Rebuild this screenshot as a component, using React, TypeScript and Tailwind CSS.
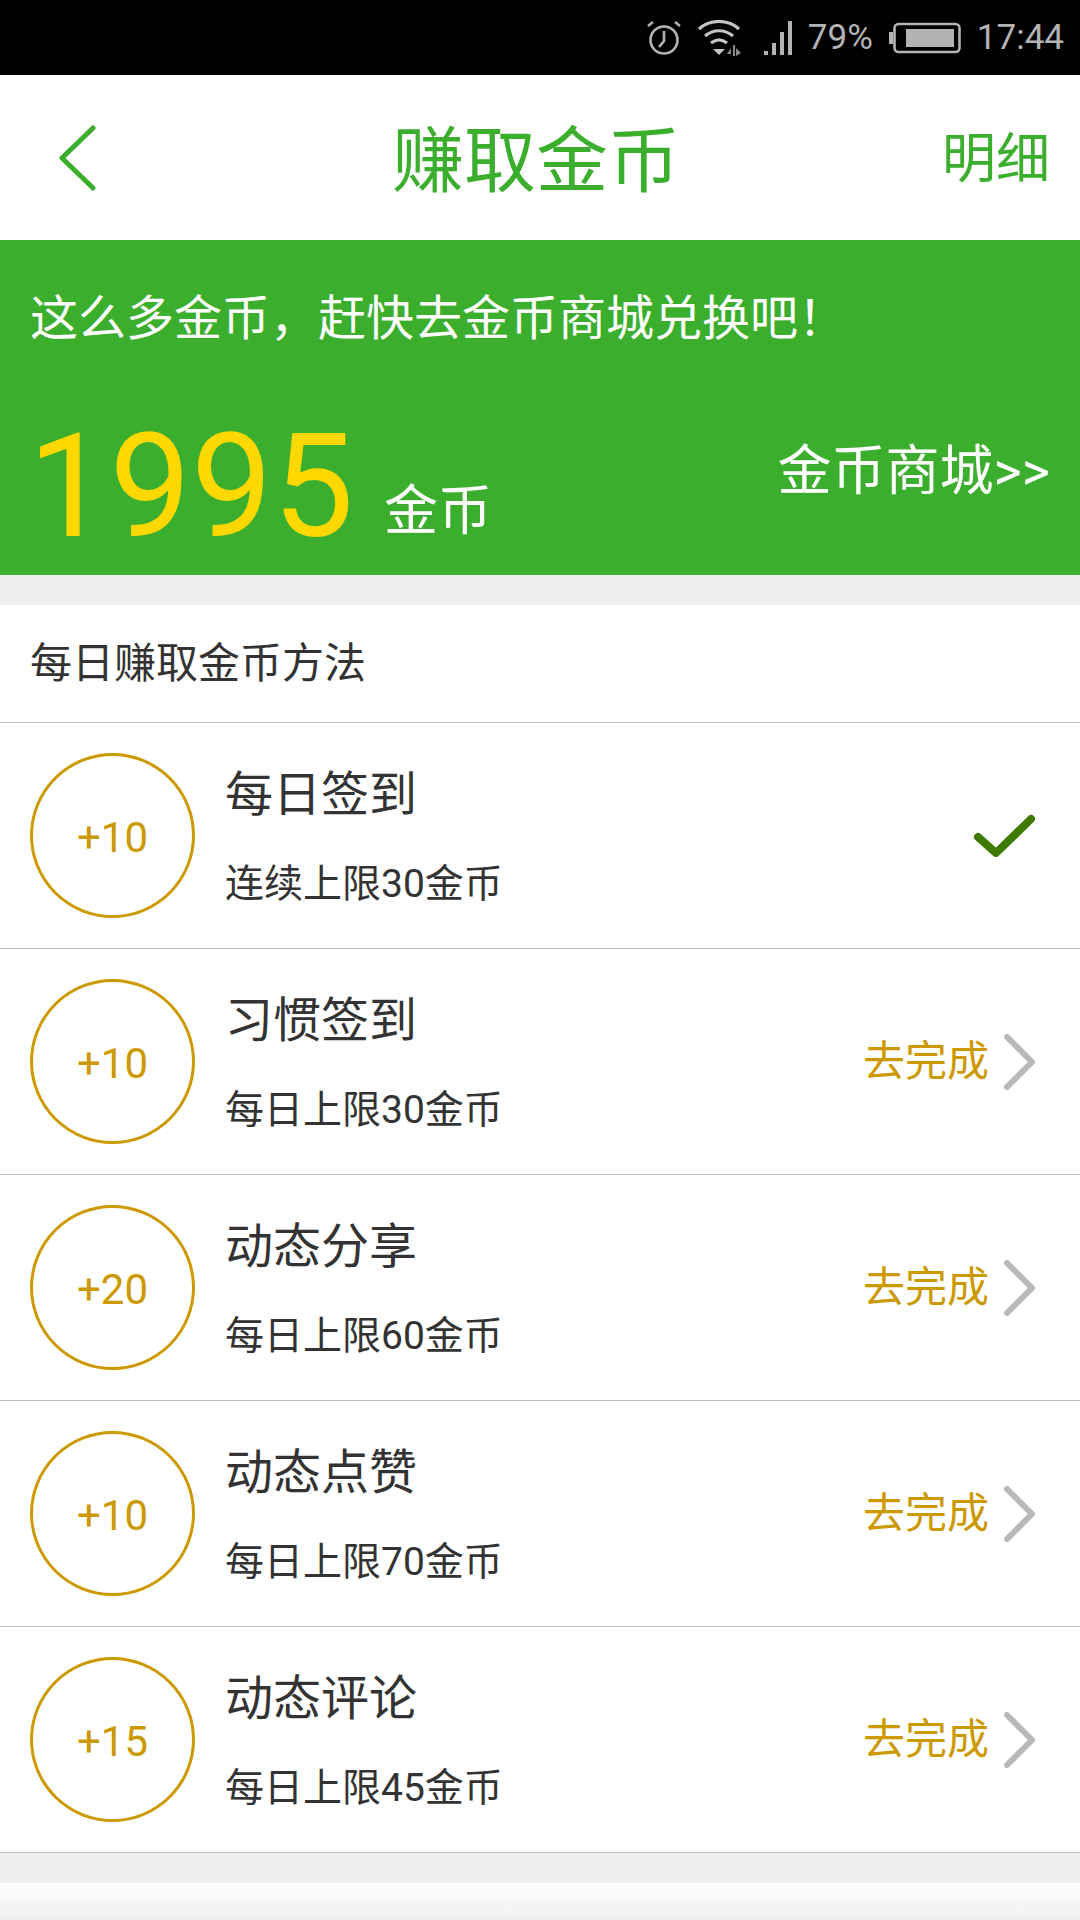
const font = { fontFamily: 'Roboto, "Noto Sans CJK SC", sans-serif' }

const rows = [
  { coins: '+10', title: '每日签到', sub: '连续上限30金币', done: true },
  { coins: '+10', title: '习惯签到', sub: '每日上限30金币', done: false },
  { coins: '+20', title: '动态分享', sub: '每日上限60金币', done: false },
  { coins: '+10', title: '动态点赞', sub: '每日上限70金币', done: false },
  { coins: '+15', title: '动态评论', sub: '每日上限45金币', done: false },
]

function StatusBar() {
  return (
    <div className="h-[75px] bg-black flex items-center justify-end pr-[16px] text-[#b3b3b3]">
      {/* alarm */}
      <svg width="36" height="36" viewBox="0 0 36 36" fill="none" stroke="#b3b3b3" strokeWidth="2.6" className="mr-[16px]">
        <circle cx="18" cy="20" r="13.5" />
        <path d="M18 11v10l-5 6" />
        <path d="M2 6l5-4M34 6l-5-4" />
      </svg>
      {/* wifi */}
      <svg width="44" height="36" viewBox="0 0 44 36" fill="none" stroke="#c4c4c4" strokeWidth="3.2" className="mr-[21px]">
        <path d="M1 9c11-10 29-10 40 0" />
        <path d="M7 16c8-7 20-7 28 0" />
        <path d="M13 23c5-4 11-4 16 0" />
        <path d="M15 29h12l-6 6z" fill="#c4c4c4" stroke="none" />
        <path d="M33 28l-4 6h4zM35 25h2v11h-2zM38 28l5 5-5 3z" fill="#8a8a8a" stroke="none" />
      </svg>
      {/* signal */}
      <svg width="30" height="36" viewBox="0 0 30 36" fill="#b3b3b3" className="mr-[15px]">
        <rect x="1" y="31" width="4" height="4" />
        <rect x="9" y="23" width="4" height="12" />
        <rect x="17" y="12" width="4" height="23" />
        <rect x="25" y="1" width="4" height="34" />
      </svg>
      <span className="text-[35px] leading-none mr-[16px]" style={font}>79%</span>
      {/* battery */}
      <svg width="72" height="32" viewBox="0 0 72 32" fill="none" className="mr-[16px]">
        <rect x="0" y="10" width="4" height="12" fill="#b3b3b3" />
        <rect x="5.5" y="2" width="65" height="28" rx="4" stroke="#b3b3b3" strokeWidth="2.6" />
        <rect x="17" y="7" width="48" height="18" fill="#b3b3b3" />
      </svg>
      <span className="text-[35px] leading-none" style={font}>17:44</span>
    </div>
  )
}

function Row({ coins, title, sub, done }: { coins: string; title: string; sub: string; done: boolean }) {
  return (
    <div className="h-[226px] flex items-center pl-[30px] border-b border-[#bdbdbd]">
      <div className="w-[165px] h-[165px] rounded-full border-[3px] border-[#cc9900] flex items-center justify-center pt-[4px] text-[42px] text-[#cc9900]">
        {coins}
      </div>
      <div className="ml-[30px] flex-1 text-[#333333] pt-[3px]">
        <div className="text-[48px] leading-[56px]">{title}</div>
        <div className="text-[39px] leading-[46px] mt-[38px]">{sub}</div>
      </div>
      {done ? (
        <svg width="64" height="44" viewBox="0 0 64 44" fill="none" stroke="#3f7a00" strokeWidth="8" strokeLinecap="round" strokeLinejoin="round" className="mr-[45px] mb-[2px]">
          <path d="M7 24l18 16L60 6" />
        </svg>
      ) : (
        <div className="flex items-center mr-[44px]">
          <span className="text-[42px] leading-none text-[#cc9900]">去完成</span>
          <svg width="33" height="56" viewBox="0 0 33 56" fill="none" stroke="#b8b8b8" strokeWidth="6" strokeLinecap="round" strokeLinejoin="round" className="ml-[14px]">
            <path d="M4 3l25 25L4 53" />
          </svg>
        </div>
      )}
    </div>
  )
}

export default function App() {
  return (
    <div className="w-[1080px] h-[1920px] overflow-hidden bg-[#efefef] flex flex-col" style={font}>
      <StatusBar />

      <div className="h-[165px] bg-white flex items-center justify-between relative text-[#3cae2d]">
        <svg width="40" height="66" viewBox="0 0 40 66" fill="none" stroke="#3cae2d" strokeWidth="5" strokeLinecap="round" strokeLinejoin="round" className="ml-[58px]">
          <path d="M35 3L4 33l31 30" />
        </svg>
        <div className="absolute left-[392px] top-[49px] text-[72px] leading-[76px]">赚取金币</div>
        <div className="text-[54px] leading-none mr-[30px] mt-[4px]">明细</div>
      </div>

      <div className="h-[335px] bg-[#3cae2d] px-[30px] pt-[48px] text-white">
        <div className="text-[48px] leading-[62px]">这么多金币，赶快去金币商城兑换吧！</div>
        <div className="flex items-end justify-between mt-[56px]">
          <div className="flex items-end">
            <span className="text-[145px] leading-[160px] -ml-[2px] text-[#ffd800]">1995</span>
            <span className="text-[54px] leading-[60px] ml-[30px] mb-[24px]">金币</span>
          </div>
          <span className="text-[54px] leading-[60px] mb-[64px]">金币商城&gt;&gt;</span>
        </div>
      </div>

      <div className="mt-[30px] bg-white">
        <div className="h-[118px] flex items-center pl-[30px] text-[42px] text-[#333333] border-b border-[#bdbdbd]">
          每日赚取金币方法
        </div>
        {rows.map((r, i) => (
          <Row key={i} {...r} />
        ))}
      </div>

      <div className="mt-[30px] flex-1 bg-gradient-to-b from-white to-[#efefef]" />
    </div>
  )
}
